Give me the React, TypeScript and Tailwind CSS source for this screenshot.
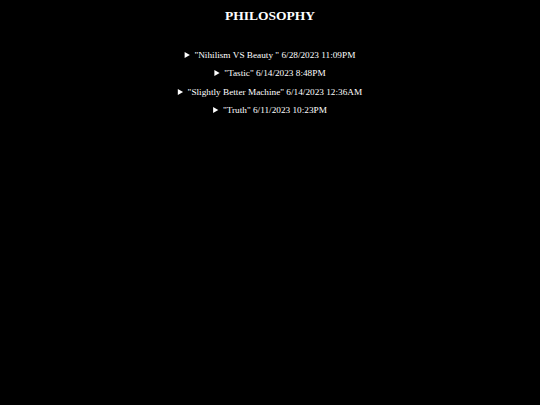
import React from "react";

const items = [
  '"Nihilism VS Beauty " 6/28/2023 11:09PM',
  '"Tastic" 6/14/2023 8:48PM',
  '"Slightly Better Machine" 6/14/2023 12:36AM',
  '"Truth" 6/11/2023 10:23PM',
];

export default function App() {
  return (
    <div className="min-h-screen w-full bg-black text-white text-center" style={{ fontFamily: '"Liberation Serif", serif' }}>
      <h1 className="pt-[7px] text-[13.5px] font-bold leading-[18px]">PHILOSOPHY</h1>
      <div className="mt-[23.5px] flex flex-col gap-[6.5px] text-[9.25px] leading-[12px]">
        {items.map((t) => (
          <details key={t}>
            <summary className="cursor-pointer">{t}</summary>
          </details>
        ))}
      </div>
    </div>
  );
}
